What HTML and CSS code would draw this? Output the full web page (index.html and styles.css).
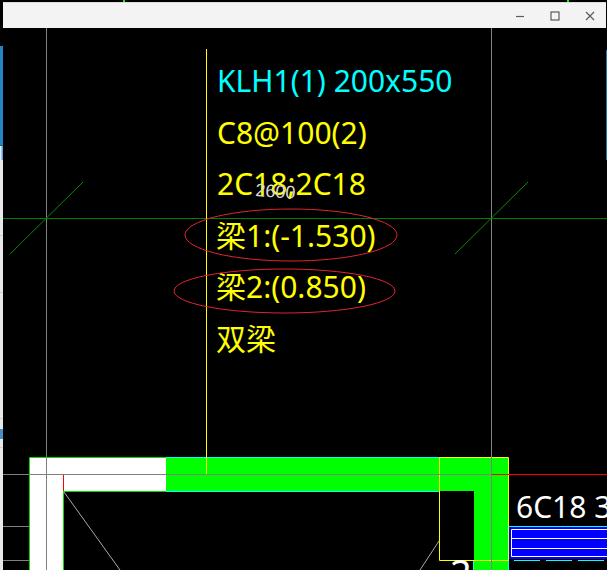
FILE: index.html
```html
<!DOCTYPE html>
<html lang="zh">
<head>
<meta charset="utf-8">
<title>CAD</title>
<link rel="stylesheet" href="styles.css">
</head>
<body>
<div class="app">
  <aside class="strip">
    <div class="strip-black"></div>
    <div class="strip-blue"></div>
    <div class="strip-mix"></div>
    <div class="strip-pane s1"></div>
    <div class="strip-pane s2"></div>
    <div class="strip-pane s3"></div>
    <div class="strip-pane s4"><span class="strip-glyph"></span></div>
    <div class="strip-pane s5"></div>
  </aside>
  <main class="main">
    <div class="topline"><span class="tick t1"></span><span class="tick t2"></span></div>
    <header class="titlebar">
      <button class="winbtn" aria-label="最小化"><svg viewBox="0 0 10 10"><path d="M1 5.500H9"/></svg></button>
      <button class="winbtn" aria-label="最大化"><svg viewBox="0 0 10 10"><rect x="1" y="1" width="8" height="8"/></svg></button>
      <button class="winbtn" aria-label="关闭"><svg viewBox="0 0 10 10"><path d="M1 1L9 9M9 1L1 9"/></svg></button>
    </header>
    <svg class="canvas" viewBox="3 28 604 542" width="604" height="542">
      <!-- structure fills -->
      <path class="f-white" d="M30 458H166V491H64V570H30Z"/>
      <path class="f-green" d="M166 458H508V570H474V491H166Z"/>
      <rect class="f-blue" x="509" y="526" width="98" height="33"/>

      <!-- outlines -->
      <path class="l-bright" d="M29.500 570V457.500H166M63.500 570V491.500H166"/>
      <path class="l-cyan" d="M166 457.500H440M166 491.500H440M508.500 526V570M508 526.500H607M473.500 560V570"/>
      <path class="l-yellow" d="M439.500 491V457.500H508.500V560.500H439.500V491"/>
      <path class="l-red" d="M63.500 474V491M491 474.500H607"/>
      <path class="l-white" d="M607 529.500H511.500V556.500H607M511 538.500H607M511 548.500H607"/>
      <path class="l-cyan" d="M514 560.500H540M546 560.500H572M578 560.500H604"/>
      <path class="l-thin" d="M64 492L120 570M439 541L420 570"/>

      <!-- axes -->
      <path class="l-gray" d="M46.500 28V570M491.500 28V570M3 474.500H491M3 526.500H29M3 560.500H29"/>
      <path class="l-green" d="M3 218.500H607"/>
      <path class="l-diag" d="M10 254L83 182M455 254L528 182"/>
      <path class="l-yellow" d="M206.500 49V474"/>

      <!-- annotation -->
      <text class="t-note t-cyan" x="217" y="92">KLH1(1) 200x550</text>
      <text class="t-note t-yellow" x="217" y="144">C8@100(2)</text>
      <text class="t-note t-yellow" x="217" y="195">2C18;2C18</text>
      <text class="t-dim" x="255" y="196" transform="rotate(4 255 196)">2600</text>
      <text class="t-note t-yellow" x="216" y="247">梁1:(-1.530)</text>
      <text class="t-note t-yellow" x="216" y="298">梁2:(0.850)</text>
      <text class="t-note t-yellow" x="216" y="350">双梁</text>
      <ellipse class="l-ring" cx="291" cy="235" rx="106" ry="26"/>
      <ellipse class="l-ring" cx="284.500" cy="291" rx="110.500" ry="22"/>

      <text class="t-note t-white" x="516" y="518">6C18 3</text>
      <text class="t-cut" x="450" y="587">2</text>

      <path class="l-edge" d="M606.500 50V160"/>
    </svg>
  </main>
</div>
</body>
</html>
```
FILE: styles.css
```css
html, body {
  margin: 0;
  padding: 0;
  background: #000;
}
.app {
  display: flex;
  width: 607px;
  height: 570px;
  overflow: hidden;
}
.strip {
  display: flex;
  flex-direction: column;
  flex: 0 0 3px;
}
.strip-black { flex: 0 0 46px; background: #000; }
.strip-blue { flex: 0 0 100px; background: #2484c6; border-bottom: 1px solid #1d5f8f; box-sizing: border-box; }
.strip-mix { flex: 0 0 14px; background: linear-gradient(90deg, #fff, #3d8fe0); }
.strip-pane { background: #e8e8e8; border-bottom: 1px solid #d0d0d0; box-sizing: border-box; }
.s1 { flex: 0 0 76px; }
.s2 { flex: 0 0 57px; }
.s3 { flex: 0 0 126px; }
.s4 { flex: 0 0 29px; position: relative; }
.s5 { flex: 1; border-bottom: 0; }
.strip-glyph {
  position: absolute;
  top: 10px;
  left: 0;
  width: 3px;
  height: 10px;
  background: #4a8cc8;
}
.main {
  display: flex;
  flex-direction: column;
  flex: 1;
  min-width: 0;
}
.topline {
  display: flex;
  flex: 0 0 2px;
  background: #000;
}
.tick { width: 2px; height: 2px; background: #00ff00; }
.t1 { margin-left: 120px; }
.t2 { margin-left: 442px; }
.titlebar {
  display: flex;
  align-items: center;
  justify-content: flex-end;
  gap: 3px;
  flex: 0 0 26px;
  box-sizing: border-box;
  width: 603px;
  padding: 1px 0 0;
  background: #f3f3f3;
  border-top: 1px solid #dcdcdc;
}
.winbtn {
  display: flex;
  align-items: center;
  justify-content: center;
  width: 32px;
  height: 24px;
  padding: 0;
  border: 0;
  background: transparent;
}
.winbtn svg {
  width: 10px;
  height: 10px;
  fill: none;
  stroke: #5c5c5c;
  stroke-width: 1.2;
}
.canvas {
  display: block;
  flex: 0 0 542px;
  background: #000;
}
.f-white { fill: #fff; }
.f-green { fill: #00ff00; }
.f-blue { fill: #0000ff; }
.l-bright, .l-cyan, .l-yellow, .l-red, .l-white, .l-thin, .l-gray, .l-green, .l-diag, .l-ring, .l-edge {
  fill: none;
  stroke-width: 1;
}
.l-bright { stroke: #00e000; }
.l-cyan { stroke: #00ffff; }
.l-yellow { stroke: #ffff00; }
.l-red { stroke: #ff0000; }
.l-white { stroke: #fff; }
.l-thin { stroke: #a8a8a8; }
.l-gray { stroke: #808080; }
.l-green { stroke: #008000; }
.l-diag { stroke: #0a8a0a; }
.l-ring { stroke: #e02530; }
.l-edge { stroke: #2277aa; }
.t-note {
  font-family: "Noto Sans", "Noto Sans CJK SC", sans-serif;
  font-size: 30px;
}
.t-cut {
  font-family: "Noto Sans", sans-serif;
  font-size: 38px;
  fill: #fff;
}
.t-cyan { fill: #00ffff; }
.t-yellow { fill: #ffff00; }
.t-white { fill: #fff; }
.t-dim {
  font-family: "Liberation Sans", sans-serif;
  font-size: 18px;
  fill: #d8d8d8;
}
```
